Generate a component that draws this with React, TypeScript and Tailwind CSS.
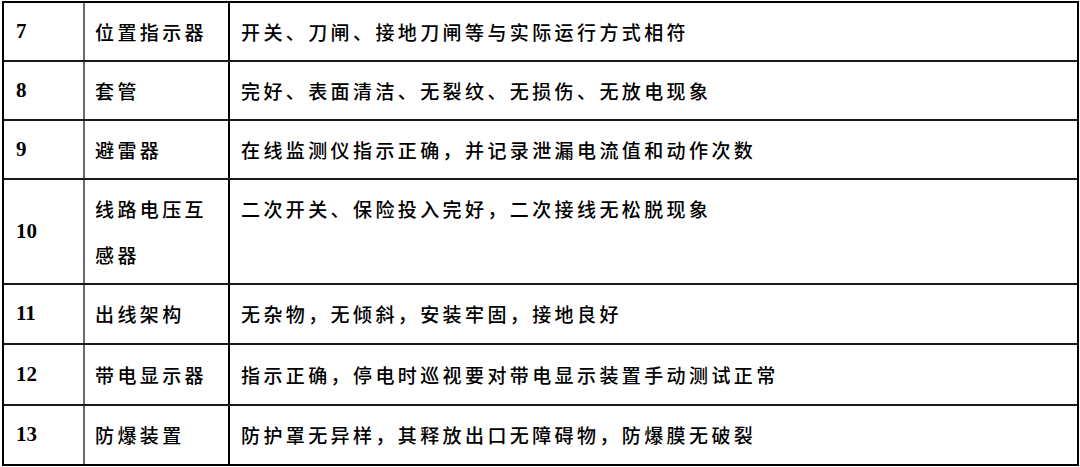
import React from "react";

type Row = { no: string; name: string[]; desc: string; h: string; tall?: boolean };

const rows: Row[] = [
  { no: "7", name: ["位置指示器"], desc: "开关、刀闸、接地刀闸等与实际运行方式相符", h: "h-[57px]" },
  { no: "8", name: ["套管"], desc: "完好、表面清洁、无裂纹、无损伤、无放电现象", h: "h-[59px]" },
  { no: "9", name: ["避雷器"], desc: "在线监测仪指示正确，并记录泄漏电流值和动作次数", h: "h-[59px]" },
  { no: "10", name: ["线路电压互", "感器"], desc: "二次开关、保险投入完好，二次接线无松脱现象", h: "h-[105px]", tall: true },
  { no: "11", name: ["出线架构"], desc: "无杂物，无倾斜，安装牢固，接地良好", h: "h-[60px]" },
  { no: "12", name: ["带电显示器"], desc: "指示正确，停电时巡视要对带电显示装置手动测试正常", h: "h-[61px]" },
  { no: "13", name: ["防爆装置"], desc: "防护罩无异样，其释放出口无障碍物，防爆膜无破裂", h: "h-[60px]" },
];

const cjk = "font-['Noto_Sans_CJK_SC',sans-serif]";

export default function App() {
  return (
    <div className="w-[1080px] h-[467px] bg-white pt-px pl-[2px]">
      <div className="w-[1077px] border-2 border-black text-black">
        {rows.map((r, i) => (
          <div
            key={r.no}
            className={`grid grid-cols-[79px_145px_1fr] ${r.h} ${i > 0 ? "border-t-2 border-[#1a1a1a]" : ""}`}
          >
            <div className="flex items-center pl-[12px] font-['Liberation_Serif',serif] font-bold text-[21px]">
              {r.no}
            </div>
            <div
              className={`flex flex-col justify-center border-l-2 border-[#6b6b6b] pl-[10px] ${cjk} font-medium text-[19px] leading-[46px] tracking-[3.4px]`}
            >
              {r.name.map((n) => (
                <span key={n}>{n}</span>
              ))}
            </div>
            <div
              className={`flex ${r.tall ? "items-start pt-[6px]" : "items-center"} border-l-2 border-black pl-[11px] ${cjk} font-medium text-[19px] leading-[46px] tracking-[3.4px]`}
            >
              {r.desc}
            </div>
          </div>
        ))}
      </div>
    </div>
  );
}
